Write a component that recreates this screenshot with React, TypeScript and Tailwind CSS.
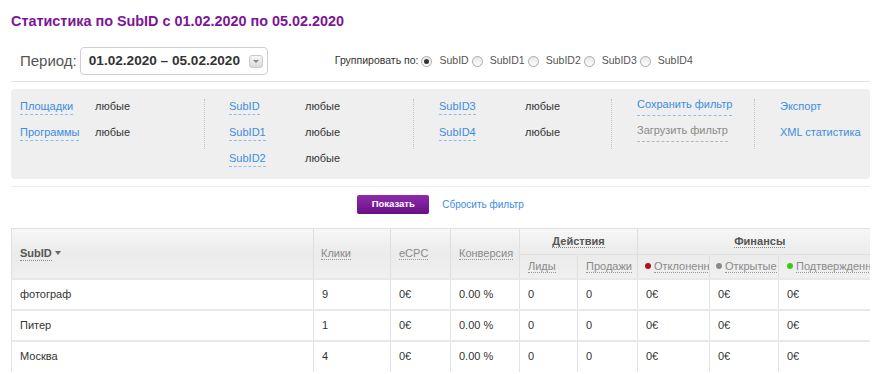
import React from "react";

const font = { fontFamily: '"Liberation Sans", Arial, sans-serif' };

function Radio({ checked }: { checked?: boolean }) {
  return (
    <span className="relative inline-flex h-[11px] w-[11px] items-center justify-center rounded-full border border-[#a9a9a9] bg-gradient-to-b from-[#e9e9e9] to-[#fdfdfd]">
      {checked && <span className="h-[5px] w-[5px] rounded-full bg-[#333]" />}
    </span>
  );
}

function FLink({ children, muted }: { children: React.ReactNode; muted?: boolean }) {
  return (
    <span
      className={
        muted
          ? "border-b border-dashed border-[#b9b9b9] pb-[2px] text-[#8a8a8a]"
          : "border-b border-dashed border-[#8fbdf0] pb-[2px] text-[#3b8de0]"
      }
    >
      {children}
    </span>
  );
}

function Sep() {
  return <div className="mt-[6px] h-[50px] w-0 border-l border-dotted border-[#c4c4c4]" />;
}

function Row({ label, w }: { label: string; w: number }) {
  return (
    <div className="flex h-[26px] items-center">
      <div style={{ width: w }}>
        <FLink>{label}</FLink>
      </div>
      <span className="text-[#333]">любые</span>
    </div>
  );
}

function Dot({ c }: { c: string }) {
  return <span className="mr-[3px] inline-block h-[6px] w-[6px] rounded-full align-[1px]" style={{ background: c }} />;
}

const rows = [
  ["фотограф", "9"],
  ["Питер", "1"],
  ["Москва", "4"],
];

export default function App() {
  return (
    <div style={font} className="h-[374px] w-[881px] overflow-hidden bg-white">
      <div className="px-[11px] pt-[11px]">
        <h1 className="text-[14.4px] font-bold leading-[20px] text-[#7d1597]">
          Статистика по SubID с 01.02.2020 по 05.02.2020
        </h1>

        <div className="mt-[16px] flex h-[28px] items-center">
          <span className="ml-[9px] text-[15px] text-[#555]">Период:</span>
          <div className="ml-[3px] flex h-[28px] w-[188px] items-center rounded-[4px] border border-[#cfcfcf] pl-[8px]">
            <span className="text-[13.6px] font-bold text-[#333]">01.02.2020 – 05.02.2020</span>
            <span className="ml-auto mr-[4px] flex h-[13px] w-[14px] items-center justify-center rounded-[3px] border border-[#c9c9c9] bg-gradient-to-b from-[#f4f4f4] to-[#dcdcdc]">
              <span className="h-0 w-0 border-x-[3px] border-t-[3px] border-x-transparent border-t-[#888]" />
            </span>
          </div>
          <div className="ml-[67px] flex items-center text-[10.5px]">
            <span className="mr-[3px] text-[#333]">Группировать по:</span>
            <Radio checked />
            <span className="ml-[7px] mr-[3px] text-[#555]">SubID</span>
            <Radio />
            <span className="ml-[7px] mr-[3px] text-[#555]">SubID1</span>
            <Radio />
            <span className="ml-[7px] mr-[3px] text-[#555]">SubID2</span>
            <Radio />
            <span className="ml-[7px] mr-[3px] text-[#555]">SubID3</span>
            <Radio />
            <span className="ml-[7px] text-[#555]">SubID4</span>
          </div>
        </div>

        <div className="mt-[6px] h-px w-[859px] bg-[#e3e3e3]" />

        <div className="mt-[7px] flex h-[90px] w-[859px] rounded-[4px] bg-[#efefef] pb-[8px] pt-[4px] text-[11px]">
          <div className="w-[193px] pl-[9px]">
            <Row label="Площадки" w={75} />
            <Row label="Программы" w={75} />
          </div>
          <Sep />
          <div className="w-[208px] pl-[24px]">
            <Row label="SubID" w={76} />
            <Row label="SubID1" w={76} />
            <Row label="SubID2" w={76} />
          </div>
          <Sep />
          <div className="w-[197px] pl-[25px]">
            <Row label="SubID3" w={86} />
            <Row label="SubID4" w={86} />
          </div>
          <Sep />
          <div className="w-[142px] pl-[25px]">
            <div className="flex h-[26px] items-center">
              <FLink>Сохранить фильтр</FLink>
            </div>
            <div className="flex h-[26px] items-center">
              <FLink muted>Загрузить фильтр</FLink>
            </div>
          </div>
          <Sep />
          <div className="pl-[25px]">
            <div className="flex h-[26px] items-center text-[#3b8de0]">Экспорт</div>
            <div className="flex h-[26px] items-center text-[#3b8de0]">XML статистика</div>
          </div>
        </div>

        <div className="mt-[7px] h-px w-[859px] bg-[#ececec]" />

        <div className="mt-[8px] flex w-[859px] items-center justify-center">
          <button className="h-[19px] w-[72px] rounded-[2px] bg-gradient-to-b from-[#8e2bab] to-[#6a0e88] text-[9.5px] font-bold text-white">
            Показать
          </button>
          <span className="ml-[13px] text-[10px] text-[#3b8de0]">Сбросить фильтр</span>
        </div>

        <div className="mt-[14px] w-[859px] overflow-hidden">
          <table className="w-[880px] table-fixed border-collapse text-[11px]">
            <colgroup>
              <col style={{ width: 302 }} />
              <col style={{ width: 77 }} />
              <col style={{ width: 60 }} />
              <col style={{ width: 69 }} />
              <col style={{ width: 58 }} />
              <col style={{ width: 60 }} />
              <col style={{ width: 72 }} />
              <col style={{ width: 69 }} />
              <col style={{ width: 113 }} />
            </colgroup>
            <thead className="bg-gradient-to-b from-[#f7f7f7] via-[#ebebeb] to-[#f0f0f0]">
              <tr className="h-[26px]">
                <th rowSpan={2} className="border-l border-t border-[#e0e0e0] pl-[8px] text-left font-bold text-[#555]">
                  <span className="border-b border-dotted border-[#888] pb-[1px]">SubID</span>
                  <span className="ml-[3px] inline-block h-0 w-0 border-x-[3px] border-t-[4px] border-x-transparent border-t-[#666] align-[2px]" />
                </th>
                <th rowSpan={2} className="border-l border-t border-[#e0e0e0] pl-[7px] text-left font-normal text-[#8a8a8a]">
                  <span className="border-b border-dotted border-[#999]">Клики</span>
                </th>
                <th rowSpan={2} className="border-l border-t border-[#e0e0e0] pl-[8px] text-left font-normal text-[#8a8a8a]">
                  <span className="border-b border-dotted border-[#999]">eCPC</span>
                </th>
                <th rowSpan={2} className="border-l border-t border-[#e0e0e0] pl-[8px] text-left font-normal text-[#8a8a8a]">
                  <span className="border-b border-dotted border-[#999]">Конверсия</span>
                </th>
                <th colSpan={2} className="border-l border-t border-[#e0e0e0] text-center font-bold text-[#555]">
                  <span className="border-b border-dotted border-[#888]">Действия</span>
                </th>
                <th colSpan={3} className="border-l border-t border-[#e0e0e0] pr-[10px] text-center font-bold text-[#555]">
                  <span className="border-b border-dotted border-[#888]">Финансы</span>
                </th>
              </tr>
              <tr className="h-[24px] text-left font-normal text-[#8a8a8a]">
                <th className="border-l border-t border-[#e0e0e0] pl-[8px] font-normal">
                  <span className="border-b border-dotted border-[#999]">Лиды</span>
                </th>
                <th className="border-l border-t border-[#e0e0e0] pl-[8px] font-normal">
                  <span className="border-b border-dotted border-[#999]">Продажи</span>
                </th>
                <th className="overflow-hidden whitespace-nowrap border-l border-t border-[#e0e0e0] pl-[7px] font-normal">
                  <Dot c="#b0121b" />
                  <span className="border-b border-dotted border-[#999]">Отклоненные</span>
                </th>
                <th className="overflow-hidden whitespace-nowrap border-l border-t border-[#e0e0e0] pl-[6px] font-normal">
                  <Dot c="#8a8a8a" />
                  <span className="border-b border-dotted border-[#999]">Открытые</span>
                </th>
                <th className="overflow-hidden whitespace-nowrap border-l border-t border-[#e0e0e0] pl-[8px] font-normal">
                  <Dot c="#3fc51c" />
                  <span className="border-b border-dotted border-[#999]">Подтвержденные</span>
                </th>
              </tr>
            </thead>
            <tbody className="text-[#333]">
              {rows.map(([name, clicks]) => (
                <tr key={name} className="h-[31px] border-t-2 border-[#e8e8e8]">
                  <td className="border-l border-[#e3e3e3] pl-[8px]">{name}</td>
                  <td className="border-l border-[#e3e3e3] pl-[8px]">{clicks}</td>
                  <td className="border-l border-[#e3e3e3] pl-[8px]">0€</td>
                  <td className="border-l border-[#e3e3e3] pl-[8px]">0.00 %</td>
                  <td className="border-l border-[#e3e3e3] pl-[8px]">0</td>
                  <td className="border-l border-[#e3e3e3] pl-[8px]">0</td>
                  <td className="border-l border-[#e3e3e3] pl-[8px]">0€</td>
                  <td className="border-l border-[#e3e3e3] pl-[8px]">0€</td>
                  <td className="border-l border-[#e3e3e3] pl-[8px]">0€</td>
                </tr>
              ))}
            </tbody>
          </table>
        </div>
      </div>
    </div>
  );
}
